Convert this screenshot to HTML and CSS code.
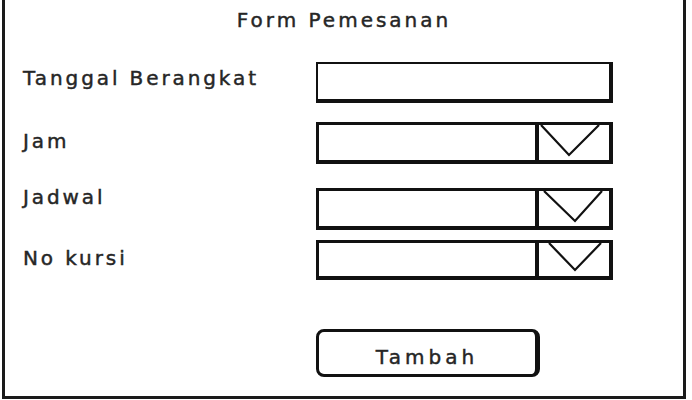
FILE: index.html
```html
<!DOCTYPE html>
<html lang="id">
<head>
<meta charset="utf-8">
<title>Form Pemesanan</title>
<link rel="stylesheet" href="styles.css">
</head>
<body>
<div class="frame">
  <div class="title">Form Pemesanan</div>
  <form class="form">
    <div class="row row-date">
      <label class="label">Tanggal Berangkat</label>
      <div class="field field-text"></div>
    </div>
    <div class="row row-time">
      <label class="label">Jam</label>
      <div class="field field-select">
        <div class="select-value"></div>
        <div class="select-arrow">
          <svg viewBox="0 0 70 34" width="70" height="34"><polyline points="2,0 30,30 60,0" fill="none" stroke="#111" stroke-width="2.2"/></svg>
        </div>
      </div>
    </div>
    <div class="row row-schedule">
      <label class="label">Jadwal</label>
      <div class="field field-select">
        <div class="select-value"></div>
        <div class="select-arrow">
          <svg viewBox="0 0 70 34" width="70" height="34"><polyline points="5,0 36,30 63,0" fill="none" stroke="#111" stroke-width="2.2"/></svg>
        </div>
      </div>
    </div>
    <div class="row row-seat">
      <label class="label">No kursi</label>
      <div class="field field-select field-short">
        <div class="select-value"></div>
        <div class="select-arrow">
          <svg viewBox="0 0 70 32" width="70" height="32"><polyline points="10,0 36,27 62,0" fill="none" stroke="#111" stroke-width="2.2"/></svg>
        </div>
      </div>
    </div>
    <div class="actions">
      <button type="button" class="btn">Tambah</button>
    </div>
  </form>
</div>
</body>
</html>
```

FILE: styles.css
```css
* {
  box-sizing: border-box;
}

body {
  margin: 0;
  background: #fff;
  font-family: "DejaVu Sans", Verdana, sans-serif;
  color: #262626;
}

.frame {
  width: 684px;
  height: 399px;
  margin-left: 2px;
  border-left: 3px solid #1a1a1a;
  border-right: 3px solid #1a1a1a;
  border-bottom: 3px solid #1a1a1a;
}

.title {
  padding-top: 8px;
  font-size: 20px;
  line-height: 24px;
  letter-spacing: 3px;
  text-align: center;
  -webkit-text-stroke: 0.45px #262626;
}

.form {
  padding-left: 18px;
}

.row {
  display: flex;
}

.label {
  width: 293px;
  font-size: 20px;
  line-height: 24px;
  letter-spacing: 2.9px;
  -webkit-text-stroke: 0.45px #262626;
}

.row-date {
  margin-top: 30px;
}
.row-date .label {
  padding-top: 4px;
}

.row-time {
  margin-top: 19px;
}
.row-time .label {
  padding-top: 7px;
}

.row-schedule {
  margin-top: 24px;
}
.row-schedule .label {
  margin-top: -3px;
}

.row-seat {
  margin-top: 10px;
}
.row-seat .label {
  padding-top: 6px;
}

.field {
  width: 297px;
  height: 42px;
  border: solid #111;
  border-width: 3px 4px 4px 3px;
  background: #fff;
}

.field-text {
  height: 41px;
  border-width: 2px 4px 4px 2px;
}

.field-short {
  height: 40px;
}

.field-select {
  display: flex;
}

.select-value {
  flex: 1;
}

.select-arrow {
  width: 74px;
  border-left: 4px solid #111;
  overflow: hidden;
}

.select-arrow svg {
  display: block;
}

.actions {
  margin-top: 49px;
  padding-left: 293px;
}

.btn {
  display: block;
  width: 224px;
  height: 48px;
  padding: 8px 0 0;
  border: solid #111;
  border-width: 3px 5px 3px 3px;
  border-radius: 8px;
  background: #fff;
  font-family: "DejaVu Sans", Verdana, sans-serif;
  font-size: 20px;
  line-height: 24px;
  letter-spacing: 4px;
  color: #262626;
  -webkit-text-stroke: 0.45px #262626;
}
```
